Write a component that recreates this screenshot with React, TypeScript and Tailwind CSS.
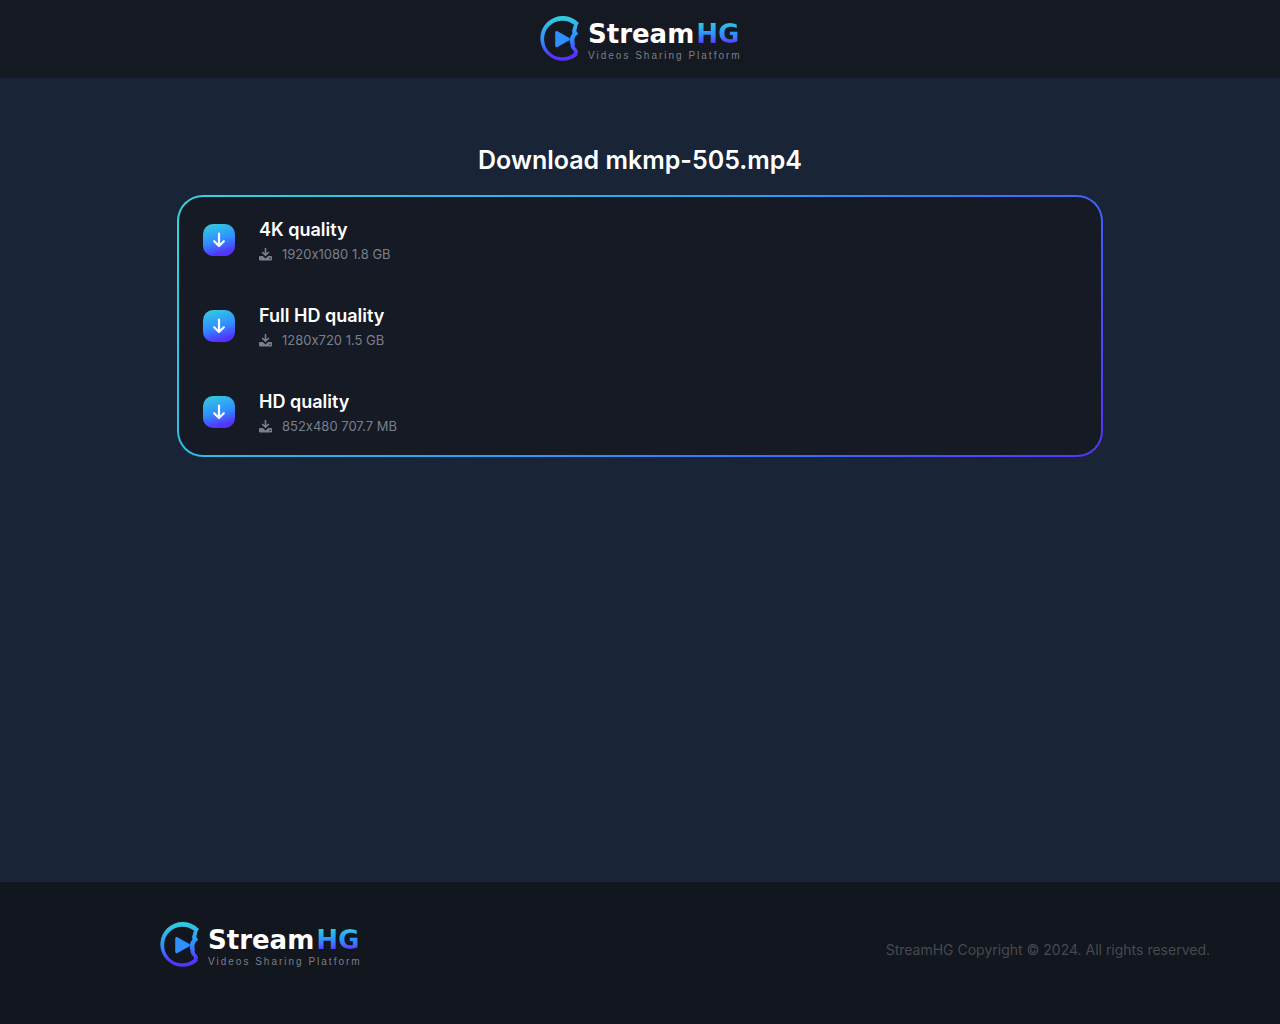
import { useId } from "react";

interface Download {
  quality: string;
  details: string;
}

const downloads: Download[] = [
  { quality: "4K quality", details: "1920x1080 1.8 GB" },
  { quality: "Full HD quality", details: "1280x720 1.5 GB" },
  { quality: "HD quality", details: "852x480 707.7 MB" },
];

function LogoMark() {
  const id = useId();

  return (
    <svg width="40" height="46" viewBox="0 0 40 46" fill="none" aria-hidden="true" className="shrink-0">
      <defs>
        <linearGradient id={id} x1="18" y1="0" x2="22" y2="46" gradientUnits="userSpaceOnUse">
          <stop stopColor="#33d0dc" />
          <stop offset="0.5" stopColor="#2f8fff" />
          <stop offset="0.85" stopColor="#5433ff" />
        </linearGradient>
      </defs>
      {/* Ring with a bite taken out of the right side */}
      <path
        fillRule="evenodd"
        fill={`url(#${id})`}
        d="M39 7A22.400 22.400 0 1 0 37.800 39C37.200 38 37.200 37.200 38 36.300C38.300 34.800 37 33.500 36.300 32.500C34.800 31 34.300 29.500 35 27.800C33.800 25.500 34.300 22 36 19.500C38 18.800 38.200 17.600 37.400 16.600C36 15 36.200 13.500 37 12.500C37 10.500 37.500 8.800 39 7ZM34.300 9.100A18.300 18.300 0 1 0 34 37.100C34.200 36.300 34 35.500 33.500 34.700C31.300 32.800 30.300 30.700 30.600 28.600C29 25 29.400 20.500 32.600 17.600C31.900 15.600 32 13.900 33 12.200C33 11 33.500 9.900 34.300 9.100Z"
      />
      <path
        d="M15.200 16.600C15.200 15.400 16.500 14.700 17.500 15.300L29 21.800C30 22.400 30 23.800 29 24.400L17.500 31C16.500 31.600 15.200 30.900 15.200 29.700Z"
        fill="#2f8fff"
      />
    </svg>
  );
}

function Logo() {
  return (
    <a href="#" className="inline-flex h-[46px] w-[200px] items-center gap-2">
      <LogoMark />
      <span className="flex flex-col pt-0.5 whitespace-nowrap">
        <span className="flex gap-0.5 font-['DejaVu_Sans'] text-[26px] leading-8 font-bold text-white">
          <span>Stream</span>
          <span className="bg-linear-to-b from-[#33d0dc] from-10% via-[#2f8fff] to-[#5433ff] to-80% bg-clip-text text-transparent">
            HG
          </span>
        </span>
        <span className="font-['Liberation_Sans'] text-[10px] leading-3 tracking-[2px] text-[#7c7f87]">
          Videos Sharing Platform
        </span>
      </span>
    </a>
  );
}

function DownloadIcon() {
  return (
    <span className="flex size-8 shrink-0 items-center justify-center rounded-[10px] bg-[linear-gradient(165deg,#33d0dc_0%,#2f8fff_50%,#5433ff_85%)]">
      <svg width="16" height="16" viewBox="0 0 16 16" fill="none" stroke="white" strokeWidth="2.2" strokeLinecap="round" strokeLinejoin="round" aria-hidden="true">
        <path d="M8 1.500V14M3.200 9.200L8 14L12.800 9.200" />
      </svg>
    </span>
  );
}

function TrayIcon() {
  return (
    <svg width="13" height="13" viewBox="0 0 13 13" aria-hidden="true" className="shrink-0">
      <path
        fill="currentColor"
        fillRule="evenodd"
        d="M5.700 0h1.600v5.200l2-1.800 1.100 1.200L6.500 8.300 2.600 4.600l1.100-1.200 2 1.800ZM1 8h2.700L6.500 10.500 9.300 8H12q1 0 1 1V11.500q0 1-1 1H1q-1 0-1-1V9q0-1 1-1ZM10.500 9.700v1.200h1.200v-1.200Z"
      />
    </svg>
  );
}

export default function App() {
  return (
    <div className="flex min-h-screen flex-col bg-[#192437] font-['Inter',sans-serif] text-white [font-feature-settings:'calt'_0]">
      <header className="flex justify-center bg-[#141922] py-4">
        <Logo />
      </header>

      <main className="flex-1 px-4 pt-16 pb-16">
        <div className="mx-auto max-w-[926px]">
          <h1 className="mb-[17px] text-center text-[25px] leading-9 font-semibold">
            Download mkmp-505.mp4
          </h1>

          {/* Gradient border around the list */}
          <div className="rounded-[26px] bg-[linear-gradient(135deg,#36d5d8_0%,#2d9cf5_50%,#5433ff_100%)] p-0.5">
            <ul className="rounded-3xl bg-[#151a24]">
              {downloads.map((item) => (
                <li key={item.quality}>
                  <a href="#" className="flex items-center gap-6 px-6 py-[19px]">
                    <DownloadIcon />
                    <span className="flex flex-col">
                      <span className="text-lg leading-7 font-semibold">{item.quality}</span>
                      <span className="flex items-center gap-2.5 text-[13px] leading-5 text-[#7a7f8c]">
                        <TrayIcon />
                        {item.details}
                      </span>
                    </span>
                  </a>
                </li>
              ))}
            </ul>
          </div>
        </div>
      </main>

      <footer className="bg-[#12161f] px-4 py-10">
        <div className="mx-auto grid min-h-[62px] max-w-[1140px] items-start gap-4 md:grid-cols-3 md:gap-0">
          <div className="flex justify-center">
            <Logo />
          </div>
          <p className="pt-4 text-center text-sm leading-6 text-[#47494e] md:col-span-2 md:text-right">
            StreamHG Copyright © 2024. All rights reserved.
          </p>
        </div>
      </footer>
    </div>
  );
}
